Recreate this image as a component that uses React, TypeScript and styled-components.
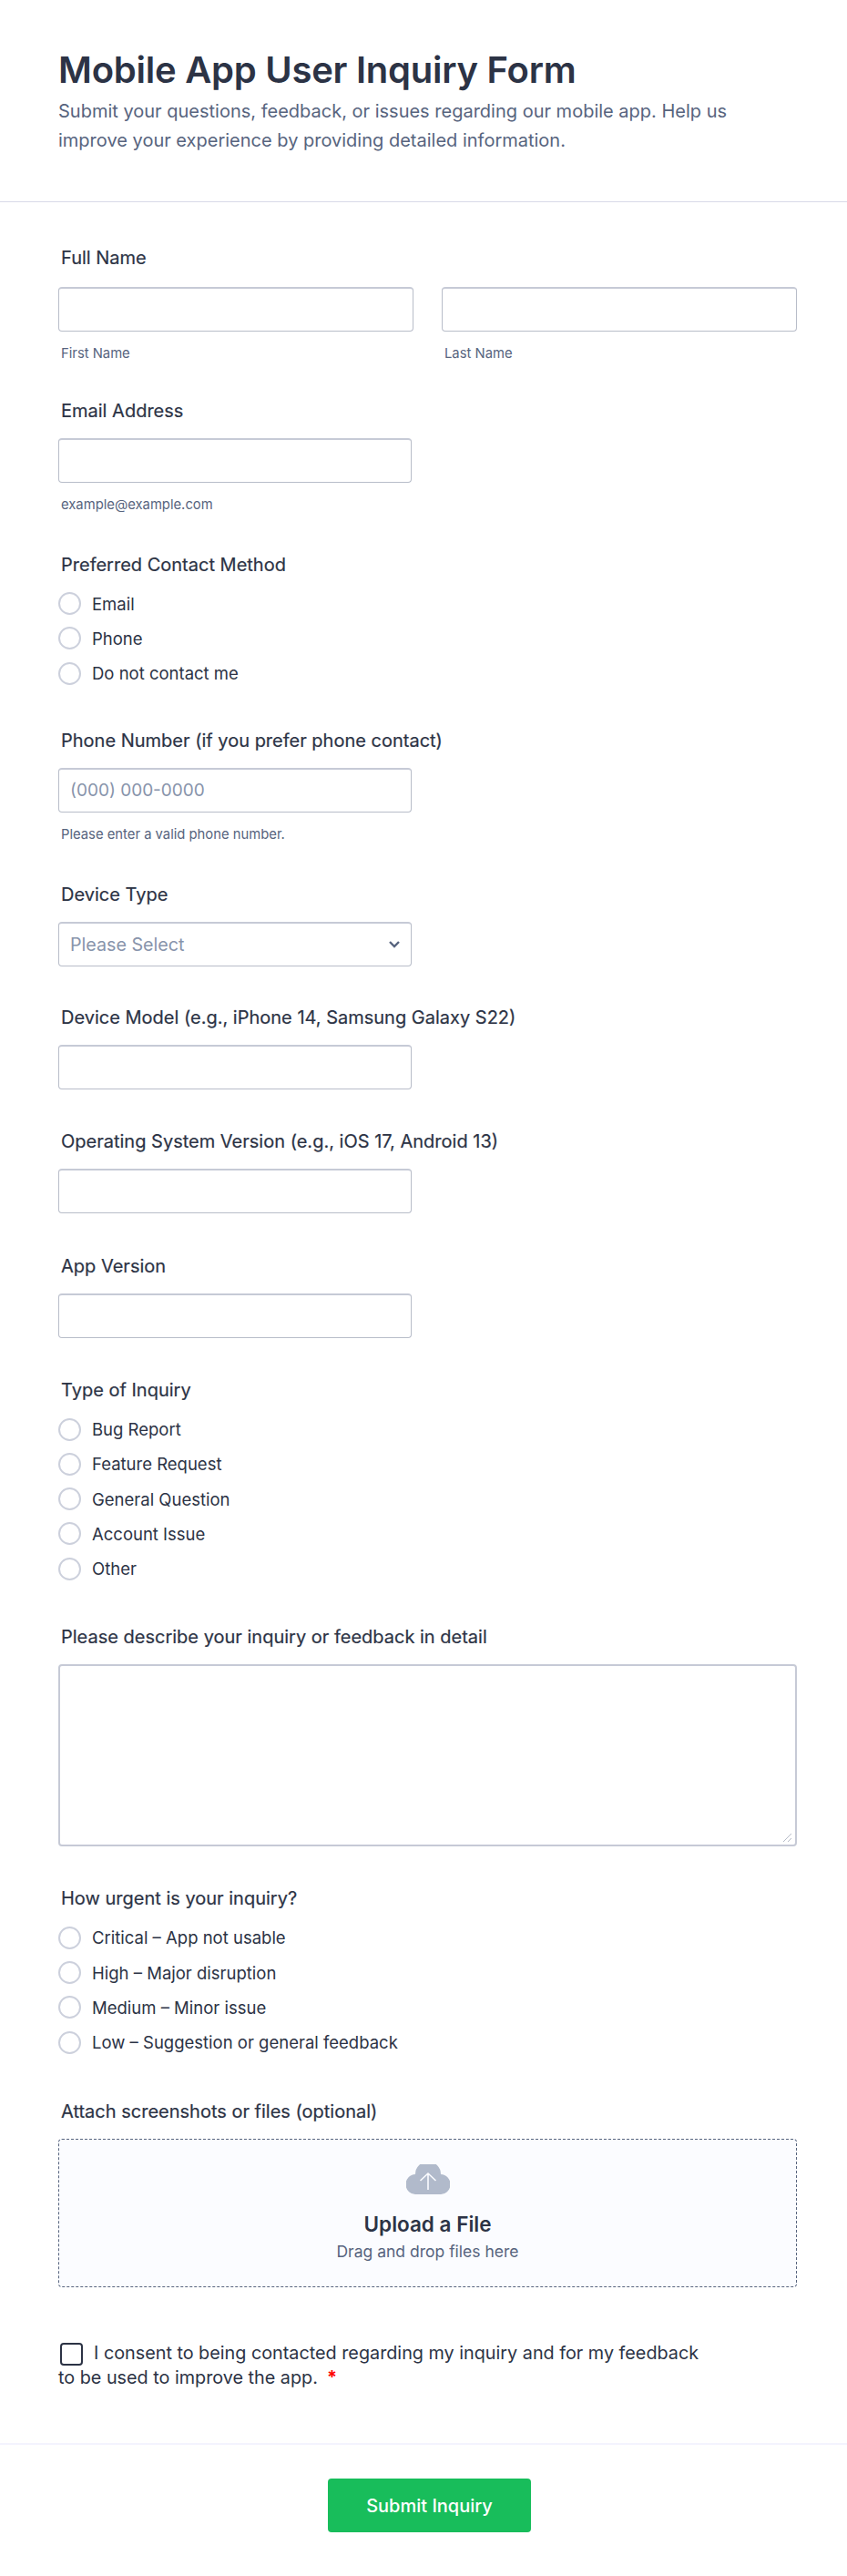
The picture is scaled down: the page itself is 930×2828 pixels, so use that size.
import styled, { createGlobalStyle } from "styled-components";

const GlobalStyle = createGlobalStyle`
  * {
    box-sizing: border-box;
  }
  html, body {
    margin: 0;
    padding: 0;
    background: #fff;
    font-family: Inter, "Noto Sans", sans-serif;
  }
`;

const Page = styled.div`
  width: 930px;
  height: 2828px;
  display: flex;
  flex-direction: column;
  overflow: hidden;
  background: #fff;
`;

const Header = styled.header`
  height: 222px;
  padding: 53px 64px 0;
  border-bottom: 1px solid #d8dae8;
`;

const Title = styled.h1`
  margin: 0 0 5px;
  font-size: 40px;
  line-height: 48px;
  font-weight: 600;
  letter-spacing: -0.25px;
  color: #2c3345;
`;

const Subtitle = styled.p`
  margin: 0;
  width: 760px;
  font-size: 20px;
  line-height: 32px;
  color: #57647e;
`;

const Form = styled.form`
  flex: 1;
  display: flex;
  flex-direction: column;
  padding: 49px 55px 0 64px;
`;

const Field = styled.div<{ $gap: number }>`
  margin-bottom: ${(p) => p.$gap}px;
`;

const Label = styled.label<{ $after?: number }>`
  display: block;
  padding-left: 3px;
  margin-bottom: ${(p) => p.$after ?? 18}px;
  font-size: 20px;
  line-height: 24px;
  font-weight: 400;
  -webkit-text-stroke: 0.2px #2c3345;
  color: #2c3345;
`;

const Columns = styled.div`
  display: grid;
  grid-template-columns: 390px 390px;
  column-gap: 31px;
`;

const Input = styled.input<{ $full?: boolean }>`
  display: block;
  width: ${(p) => (p.$full ? "100%" : "388px")};
  height: 49px;
  padding: 0 12px;
  border: 1px solid #b8bdc9;
  border-top: 2px solid #c6cad6;
  border-radius: 4px;
  background: #fff;
  font-family: inherit;
  font-size: 19px;
  color: #2c3345;
  outline: none;

  &::placeholder {
    color: #8894ab;
  }
`;

const Hint = styled.div`
  margin-top: 15px;
  padding-left: 3px;
  font-size: 14.8px;
  line-height: 18px;
  color: #57647e;
`;

const SelectBox = styled.div`
  position: relative;
  width: 388px;
`;

const Select = styled.select`
  display: block;
  width: 100%;
  height: 49px;
  padding: 0 12px;
  appearance: none;
  border: 1px solid #b8bdc9;
  border-top: 2px solid #c6cad6;
  border-radius: 4px;
  background: #fff;
  font-family: inherit;
  font-size: 19.7px;
  color: #8894ab;
`;

const Chevron = styled.svg`
  position: absolute;
  top: 20px;
  right: 13px;
  width: 12px;
  height: 9px;
  pointer-events: none;
`;

const RadioList = styled.div`
  display: flex;
  flex-direction: column;
  gap: 13.3px;
`;

const RadioRow = styled.label`
  display: flex;
  align-items: center;
  gap: 12px;
  height: 25px;
  font-size: 18.5px;
  color: #2c3345;
`;

const RadioDot = styled.span`
  flex: none;
  width: 25px;
  height: 25px;
  border: 2px solid #ccd0dc;
  border-radius: 50%;
  background: #fff;
`;

const TextAreaBox = styled.div`
  position: relative;
`;

const TextArea = styled.textarea`
  display: block;
  width: 100%;
  height: 200px;
  border: 2px solid #c6cad6;
  border-radius: 4px;
  background: #fff;
  resize: none;
  outline: none;
`;

const Grip = styled.svg`
  position: absolute;
  right: 5px;
  bottom: 4px;
  width: 12px;
  height: 12px;
  pointer-events: none;
`;

const Upload = styled.div`
  display: flex;
  flex-direction: column;
  align-items: center;
  height: 163px;
  padding-top: 27px;
  border: 1px dashed #57647e;
  border-radius: 4px;
  background: #fbfcff;
`;

const Cloud = styled.svg`
  width: 48px;
  height: 33px;
`;

const UploadTitle = styled.div`
  margin-top: 20px;
  font-size: 22.5px;
  line-height: 26px;
  font-weight: 600;
  color: #2c3345;
`;

const UploadHint = styled.div`
  margin-top: 6px;
  font-size: 17.5px;
  line-height: 22px;
  color: #57647e;
`;

const Consent = styled.div`
  width: 715px;
  font-size: 19.8px;
  line-height: 27px;
  color: #2c3345;
`;

const Box = styled.span`
  display: inline-block;
  width: 25px;
  height: 25px;
  margin: 0 12px 0 2px;
  vertical-align: -7px;
  border: 2px solid #2c3345;
  border-radius: 4px;
  background: #fff;
`;

const Required = styled.span`
  margin-left: 10px;
  font-weight: 700;
  color: #f00;
`;

const Footer = styled.footer`
  display: flex;
  justify-content: center;
  height: 146px;
  padding-top: 37px;
  border-top: 2px solid #f3f3fe;
`;

const SubmitButton = styled.button`
  width: 223px;
  height: 59px;
  margin-left: 13px;
  border: 0;
  border-radius: 4px;
  background: #18bd5b;
  font-family: inherit;
  font-size: 20px;
  font-weight: 500;
  color: #fff;
`;

const contactOptions = ["Email", "Phone", "Do not contact me"];
const inquiryOptions = ["Bug Report", "Feature Request", "General Question", "Account Issue", "Other"];
const urgencyOptions = [
  "Critical – App not usable",
  "High – Major disruption",
  "Medium – Minor issue",
  "Low – Suggestion or general feedback",
];

const RadioGroup = ({ options }: { options: string[] }) => (
  <RadioList>
    {options.map((option) => (
      <RadioRow key={option}>
        <RadioDot />
        {option}
      </RadioRow>
    ))}
  </RadioList>
);

const App = () => {
  return (
    <Page>
      <GlobalStyle />
      <Header>
        <Title>Mobile App User Inquiry Form</Title>
        <Subtitle>
          Submit your questions, feedback, or issues regarding our mobile app. Help us improve your experience by
          providing detailed information.
        </Subtitle>
      </Header>
      <Form>
        <Field $gap={42}>
          <Label $after={20}>Full Name</Label>
          <Columns>
            <div>
              <Input $full />
              <Hint>First Name</Hint>
            </div>
            <div>
              <Input $full />
              <Hint>Last Name</Hint>
            </div>
          </Columns>
        </Field>
        <Field $gap={45}>
          <Label>Email Address</Label>
          <Input />
          <Hint>example@example.com</Hint>
        </Field>
        <Field $gap={49}>
          <Label $after={18}>Preferred Contact Method</Label>
          <RadioGroup options={contactOptions} />
        </Field>
        <Field $gap={45}>
          <Label>Phone Number (if you prefer phone contact)</Label>
          <Input placeholder="(000) 000-0000" />
          <Hint>Please enter a valid phone number.</Hint>
        </Field>
        <Field $gap={44}>
          <Label>Device Type</Label>
          <SelectBox>
            <Select defaultValue="">
              <option value="">Please Select</option>
            </Select>
            <Chevron viewBox="0 0 12 9">
              <path d="M1 2 L6 7 L11 2" fill="none" stroke="#57647e" strokeWidth="2.4" />
            </Chevron>
          </SelectBox>
        </Field>
        <Field $gap={45}>
          <Label>Device Model (e.g., iPhone 14, Samsung Galaxy S22)</Label>
          <Input />
        </Field>
        <Field $gap={46}>
          <Label>Operating System Version (e.g., iOS 17, Android 13)</Label>
          <Input />
        </Field>
        <Field $gap={45}>
          <Label>App Version</Label>
          <Input />
        </Field>
        <Field $gap={50}>
          <Label $after={19}>Type of Inquiry</Label>
          <RadioGroup options={inquiryOptions} />
        </Field>
        <Field $gap={45}>
          <Label>Please describe your inquiry or feedback in detail</Label>
          <TextAreaBox>
            <TextArea />
            <Grip viewBox="0 0 12 12">
              <path d="M2 11 L11 2 M7 11 L11 7" stroke="#b8bdc9" strokeWidth="1" />
            </Grip>
          </TextAreaBox>
        </Field>
        <Field $gap={51}>
          <Label $after={19}>How urgent is your inquiry?</Label>
          <RadioGroup options={urgencyOptions} />
        </Field>
        <Field $gap={59}>
          <Label>Attach screenshots or files (optional)</Label>
          <Upload>
            <Cloud viewBox="0 0 48 33">
              <path d="M11 33 A11 11 0 0 1 10 11 A14 14 0 0 1 38 11 A11 11 0 0 1 37 33 Z" fill="#b1bacb" />
              <path d="M24 28 V10 M15.5 18 L24 10 L32.5 18" fill="none" stroke="#fbfcff" strokeWidth="1.6" />
            </Cloud>
            <UploadTitle>Upload a File</UploadTitle>
            <UploadHint>Drag and drop files here</UploadHint>
          </Upload>
        </Field>
        <Consent>
          <Box />I consent to being contacted regarding my inquiry and for my feedback to be used to improve the app.
          <Required>*</Required>
        </Consent>
      </Form>
      <Footer>
        <SubmitButton type="button">Submit Inquiry</SubmitButton>
      </Footer>
    </Page>
  );
};

export default App;
